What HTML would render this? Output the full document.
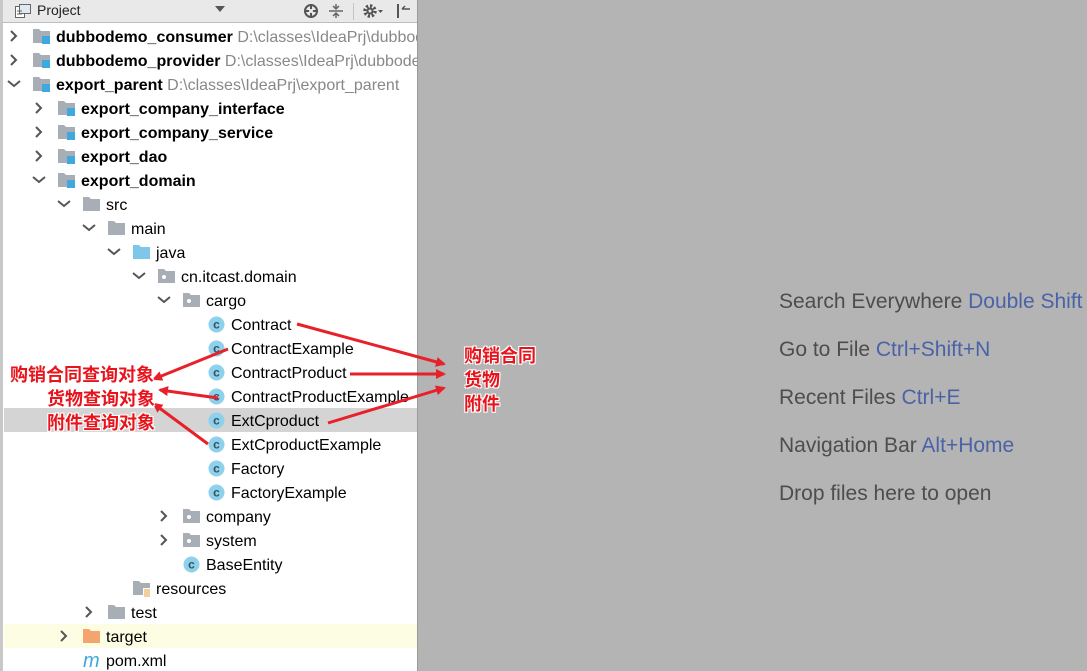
<!DOCTYPE html>
<html><head><meta charset="utf-8"><style>
*{margin:0;padding:0;box-sizing:border-box}
body{width:1087px;height:671px;overflow:hidden;background:#b4b4b4;font-family:"Liberation Sans","Noto Sans CJK SC",sans-serif;position:relative}
#left{position:absolute;left:0;top:0;width:418px;height:671px;background:#fff;border-right:1px solid #9a9a9a;overflow:hidden}
#left:before{content:"";position:absolute;left:0;top:0;width:3px;height:671px;background:#c8c8c8}
#hdr{position:absolute;left:3px;top:0;width:414px;height:23px;background:#e9e9e9;border-bottom:1px solid #bcbcbc;font-size:14px;color:#222}
.row{position:absolute;left:4px;width:413px;height:24px;font-size:16px;color:#000;white-space:nowrap;overflow:hidden}
.row span{position:absolute;top:5px}
.b{font-weight:bold}
.g{color:#888;font-weight:normal}
.ic{position:absolute;top:4px}
.ar{position:absolute;top:6px}
#right{position:absolute;left:779px;top:290px;font-size:21px;color:#4d4d4d}
#right div{height:48px}
#right i{font-style:normal;color:#4a63a8}
.ann{position:absolute;font-weight:bold;font-size:18px;color:#e8141c;font-family:"Liberation Sans","Noto Sans CJK SC",sans-serif;text-shadow:-1px -1px 0 #fff,1px -1px 0 #fff,-1px 1px 0 #fff,1px 1px 0 #fff,0 0 2px #fff;white-space:nowrap}
</style></head><body>
<div id="left">
<div id="hdr">
<svg style="position:absolute;left:12px;top:4px" width="16" height="14"><rect x="0.5" y="2.5" width="9" height="11" fill="#fff" stroke="#666"/><rect x="4.5" y="0.5" width="11" height="9" fill="#dfe8f3" stroke="#666"/><line x1="2" y1="7" x2="7" y2="7" stroke="#666"/><line x1="2" y1="10" x2="7" y2="10" stroke="#666"/></svg>
<span style="position:absolute;left:34px;top:2px">Project</span>
<span style="position:absolute;left:212px;top:6px;width:0;height:0;border-left:5px solid transparent;border-right:5px solid transparent;border-top:6px solid #555"></span>
<svg style="position:absolute;left:300px;top:3px" width="16" height="16"><circle cx="8" cy="8" r="6" fill="none" stroke="#555" stroke-width="2"/><line x1="8" y1="1" x2="8" y2="15" stroke="#555" stroke-width="2"/><line x1="1" y1="8" x2="15" y2="8" stroke="#555" stroke-width="2"/><circle cx="8" cy="8" r="2" fill="#e9e9e9"/></svg>
<svg style="position:absolute;left:325px;top:3px" width="16" height="16"><line x1="1" y1="8" x2="15" y2="8" stroke="#666" stroke-width="1.5"/><path d="M8 1v4M5 3l3 3 3-3M8 15v-4M5 13l3-3 3 3" stroke="#666" fill="none" stroke-width="1.5"/></svg>
<div style="position:absolute;left:350px;top:3px;width:1px;height:17px;background:#c4c4c4"></div>
<svg style="position:absolute;left:359px;top:3px" width="22" height="16"><circle cx="8" cy="8" r="5" fill="none" stroke="#555" stroke-width="3.5" stroke-dasharray="2.2 1.7"/><circle cx="8" cy="8" r="3.5" fill="#555"/><circle cx="8" cy="8" r="1.5" fill="#e9e9e9"/><path d="M16 7l2.5 3 2.5-3z" fill="#555"/></svg>
<svg style="position:absolute;left:392px;top:3px" width="16" height="16"><rect x="2" y="1" width="2" height="14" fill="#555"/><path d="M7 6h8M7 6l3-3" stroke="#555" stroke-width="1.5" fill="none"/></svg>
</div>
<div id="tree"></div>
</div>
<div id="right">
<div>Search Everywhere <i>Double Shift</i></div>
<div>Go to File <i>Ctrl+Shift+N</i></div>
<div>Recent Files <i>Ctrl+E</i></div>
<div>Navigation Bar <i>Alt+Home</i></div>
<div>Drop files here to open</div>
</div>
<svg style="position:absolute;left:0;top:0" width="1087" height="671">
<defs><marker id="a" markerWidth="10" markerHeight="10" refX="8" refY="5" orient="auto" markerUnits="userSpaceOnUse"><path d="M0 0L10 5L0 10z" fill="#e8202a"/></marker></defs>
<g stroke="#e8202a" stroke-width="3" marker-end="url(#a)">
<line x1="297" y1="324" x2="444" y2="364"/>
<line x1="350" y1="374" x2="444" y2="374"/>
<line x1="328" y1="423" x2="444" y2="388"/>
<line x1="228" y1="349" x2="154" y2="379"/>
<line x1="218" y1="398" x2="160" y2="390"/>
<line x1="208" y1="444" x2="154" y2="404"/>
</g>
</svg>
<div class="ann" style="left:10px;top:361px">购销合同查询对象</div>
<div class="ann" style="left:47px;top:385px">货物查询对象</div>
<div class="ann" style="left:47px;top:409px">附件查询对象</div>
<div class="ann" style="left:464px;top:342px">购销合同</div>
<div class="ann" style="left:464px;top:366px">货物</div>
<div class="ann" style="left:464px;top:390px">附件</div>
<script>
var R=[[0,'>','mod','dubbodemo_consumer',1,'D:\\classes\\IdeaPrj\\dubbodemo_consumer'],
[0,'>','mod','dubbodemo_provider',1,'D:\\classes\\IdeaPrj\\dubbodemo_provider'],
[0,'v','mod','export_parent',1,'D:\\classes\\IdeaPrj\\export_parent'],
[1,'>','mod','export_company_interface',1],[1,'>','mod','export_company_service',1],[1,'>','mod','export_dao',1],[1,'v','mod','export_domain',1],
[2,'v','fold','src'],[3,'v','fold','main'],[4,'v','blue','java'],[5,'v','pkg','cn.itcast.domain'],[6,'v','pkg','cargo'],
[7,'','cls','Contract'],[7,'','cls','ContractExample'],[7,'','cls','ContractProduct'],[7,'','cls','ContractProductExample'],[7,'','cls','ExtCproduct'],[7,'','cls','ExtCproductExample'],[7,'','cls','Factory'],[7,'','cls','FactoryExample'],
[6,'>','pkg','company'],[6,'>','pkg','system'],[6,'','cls','BaseEntity'],[4,'','res','resources'],[3,'>','fold','test'],[2,'>','orange','target'],[2,'','m','pom.xml']];
var ic={
mod:'<svg width="18" height="16"><path d="M0 1h6l2 2h9v12H0z" fill="#a7aeb5"/><rect x="9" y="8" width="8" height="8" fill="#3fa9dd"/></svg>',
fold:'<svg width="18" height="16"><path d="M0 1h6l2 2h9v12H0z" fill="#a7aeb5"/></svg>',
blue:'<svg width="18" height="16"><path d="M0 1h6l2 2h9v12H0z" fill="#7fc7ea"/></svg>',
orange:'<svg width="18" height="16"><path d="M0 1h6l2 2h9v12H0z" fill="#f4a46d"/></svg>',
pkg:'<svg width="18" height="16"><path d="M0 1h6l2 2h9v12H0z" fill="#a7aeb5"/><circle cx="6" cy="9" r="2" fill="#fff"/></svg>',
res:'<svg width="18" height="17"><path d="M0 1h6l2 2h9v12H0z" fill="#a7aeb5"/><rect x="10" y="8" width="7" height="9" fill="#fff"/><path d="M11 10h6M11 12h6M11 14h6M11 16h6" stroke="#e0a33a"/></svg>',
cls:'<svg width="18" height="18"><circle cx="8.5" cy="8.5" r="8" fill="#8ed1ec"/><text x="8.5" y="12.5" font-size="12" font-family="Liberation Sans" font-weight="bold" text-anchor="middle" fill="#34505f">c</text></svg>',
m:'<svg width="22" height="18"><text x="0" y="15" font-size="20" font-style="italic" font-family="Liberation Sans" fill="#3fa9dd">m</text></svg>'};
var h='';
R.forEach(function(r,i){var t=24+24*i,L=r[0],bg='';
if(i==16)bg='background:#d4d4d4;';if(i==25)bg='background:#fdfde4;';
var x=4+25*L;
h+='<div class="row" style="top:'+t+'px;'+bg+'">';
if(r[1]=='>')h+='<svg class="ar" style="left:'+x+'px" width="12" height="12"><path d="M3 1l5 5-5 5" stroke="#555" stroke-width="2" fill="none"/></svg>';
if(r[1]=='v')h+='<svg class="ar" style="left:'+(x-1)+'px" width="14" height="12"><path d="M1 3l6 5 6-5" stroke="#555" stroke-width="2" fill="none"/></svg>';
h+='<div class="ic" style="left:'+(x+25)+'px">'+ic[r[2]]+'</div>';
h+='<span class="'+(r[4]?'b':'')+'" style="left:'+(x+48)+'px">'+r[3]+(r[5]?' <span class="g" style="position:static">'+r[5]+'</span>':'')+'</span></div>';});
document.getElementById('tree').innerHTML=h;
</script>
</body></html>
